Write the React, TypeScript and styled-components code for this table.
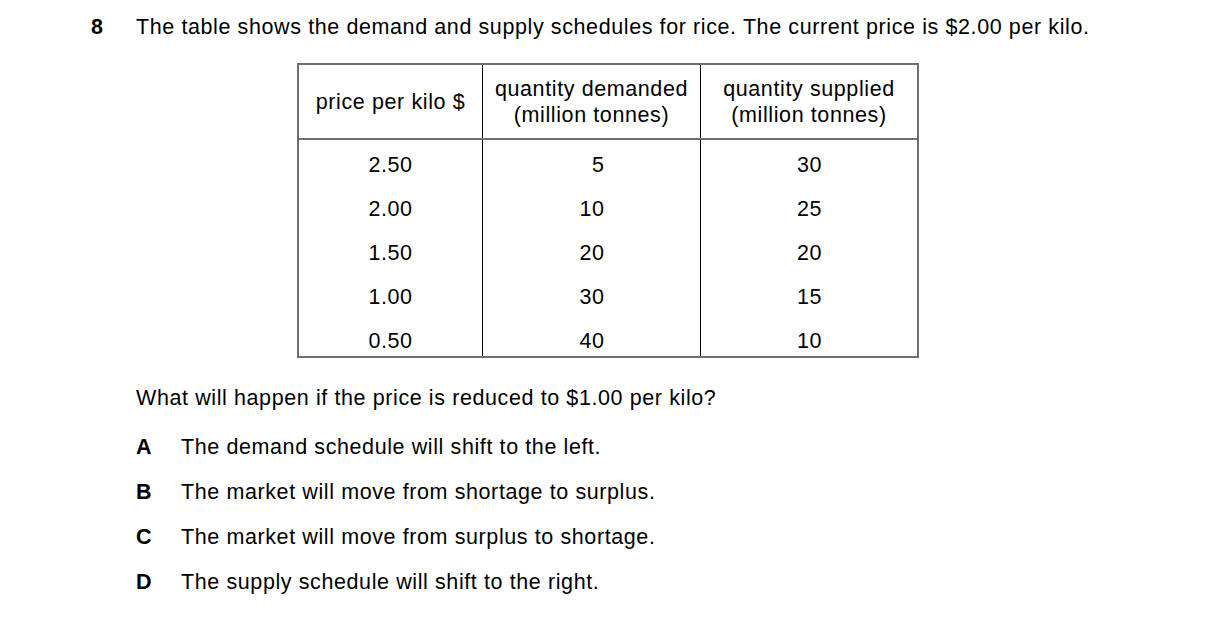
import React from "react";
import styled, { createGlobalStyle } from "styled-components";

const GlobalStyle = createGlobalStyle`
  html, body {
    margin: 0;
    padding: 0;
    background: #ffffff;
  }
  body {
    font-family: "Liberation Sans", Arial, sans-serif;
    color: #000000;
    font-size: 21.5px;
    letter-spacing: 0.6px;
    line-height: 23px;
  }
`;

const Page = styled.div`
  display: flex;
  padding: 16px 0 0 91px;
  width: 1216px;
  height: 620px;
  box-sizing: border-box;
`;

const Number = styled.div`
  width: 45px;
  flex: none;
  font-weight: bold;
`;

const Content = styled.div`
  display: flex;
  flex-direction: column;
  align-items: flex-start;
`;

const Stem = styled.p`
  margin: 0;
  white-space: nowrap;
`;

const Table = styled.table`
  margin: 24px 0 0 161px;
  border-collapse: collapse;
  border: 2px solid #6f6f6f;
  font-size: 21.5px;
  letter-spacing: 0.6px;
`;

const HeadCell = styled.th<{ $w: number }>`
  width: ${(p) => p.$w}px;
  font-weight: normal;
  text-align: center;
  vertical-align: middle;
  line-height: 26px;
  padding: 11px 0 10px;
  border-left: 1px solid #000;
  border-bottom: 2px solid #6f6f6f;
  white-space: nowrap;
  &:first-child {
    border-left: none;
  }
`;

const Cell = styled.td<{ $first?: boolean; $last?: boolean }>`
  text-align: center;
  line-height: 23px;
  padding: ${(p) => (p.$first ? "13.5px" : "10.5px")} 0
    ${(p) => (p.$last ? "3.5px" : "10.5px")};
  border-left: 1px solid #000;
  &:first-child {
    border-left: none;
  }
`;

const Num = styled.span`
  display: inline-block;
  min-width: 26px;
  text-align: right;
`;

const Question = styled.p`
  margin: 29px 0 0;
  white-space: nowrap;
`;

const Options = styled.ol`
  list-style: none;
  margin: 26px 0 0;
  padding: 0;
  display: flex;
  flex-direction: column;
  gap: 22px;
`;

const Option = styled.li`
  display: flex;
  white-space: nowrap;
`;

const Letter = styled.span`
  width: 45px;
  flex: none;
  font-weight: bold;
`;

const rows = [
  ["2.50", "5", "30"],
  ["2.00", "10", "25"],
  ["1.50", "20", "20"],
  ["1.00", "30", "15"],
  ["0.50", "40", "10"],
];

const options = [
  ["A", "The demand schedule will shift to the left."],
  ["B", "The market will move from shortage to surplus."],
  ["C", "The market will move from surplus to shortage."],
  ["D", "The supply schedule will shift to the right."],
];

export default function App() {
  return (
    <>
      <GlobalStyle />
      <Page>
        <Number>8</Number>
        <Content>
          <Stem>
            The table shows the demand and supply schedules for rice. The current price is $2.00 per kilo.
          </Stem>
          <Table>
            <thead>
              <tr>
                <HeadCell $w={183}>price per kilo $</HeadCell>
                <HeadCell $w={217}>
                  quantity demanded
                  <br />
                  (million tonnes)
                </HeadCell>
                <HeadCell $w={216}>
                  quantity supplied
                  <br />
                  (million tonnes)
                </HeadCell>
              </tr>
            </thead>
            <tbody>
              {rows.map((r, i) => (
                <tr key={r[0]}>
                  <Cell $first={i === 0} $last={i === rows.length - 1}>
                    {r[0]}
                  </Cell>
                  <Cell $first={i === 0} $last={i === rows.length - 1}>
                    <Num>{r[1]}</Num>
                  </Cell>
                  <Cell $first={i === 0} $last={i === rows.length - 1}>
                    <Num>{r[2]}</Num>
                  </Cell>
                </tr>
              ))}
            </tbody>
          </Table>
          <Question>What will happen if the price is reduced to $1.00 per kilo?</Question>
          <Options>
            {options.map(([l, t]) => (
              <Option key={l}>
                <Letter>{l}</Letter>
                <span>{t}</span>
              </Option>
            ))}
          </Options>
        </Content>
      </Page>
    </>
  );
}
